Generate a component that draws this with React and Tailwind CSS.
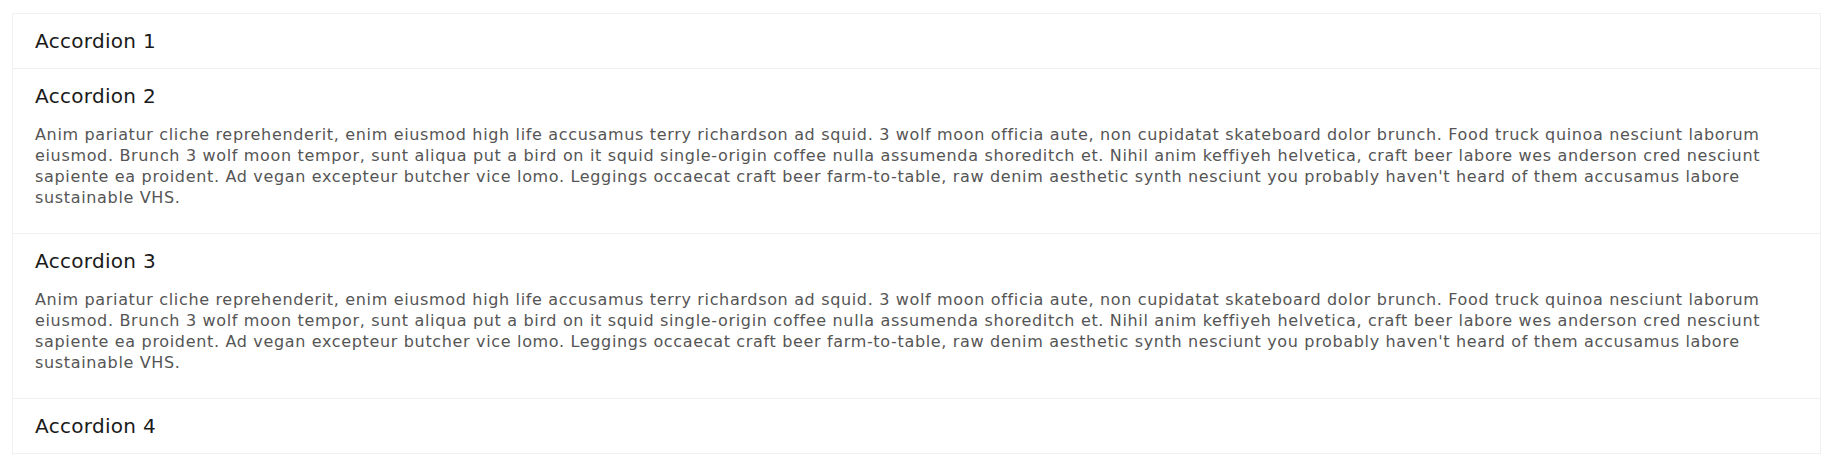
import React from "react";

const lines = [
  "Anim pariatur cliche reprehenderit, enim eiusmod high life accusamus terry richardson ad squid. 3 wolf moon officia aute, non cupidatat skateboard dolor brunch. Food truck quinoa nesciunt laborum",
  "eiusmod. Brunch 3 wolf moon tempor, sunt aliqua put a bird on it squid single-origin coffee nulla assumenda shoreditch et. Nihil anim keffiyeh helvetica, craft beer labore wes anderson cred nesciunt",
  "sapiente ea proident. Ad vegan excepteur butcher vice lomo. Leggings occaecat craft beer farm-to-table, raw denim aesthetic synth nesciunt you probably haven't heard of them accusamus labore",
  "sustainable VHS.",
];

function Body() {
  return (
    <div className="px-[22px] pt-[1px] pb-[25px] text-[16px] leading-[21px] text-[#555555] tracking-[0.66px]">
      {lines.map((l, i) => (
        <div key={i} className="whitespace-nowrap">
          {l}
        </div>
      ))}
    </div>
  );
}

function Item({ title, open, first }) {
  return (
    <div className={first ? "" : "border-t border-[#f0f0f0]"}>
      <div className="px-[22px] py-[12px] text-[20px] leading-[30px] text-[#1a1a1a] tracking-[0.3px]">
        {title}
      </div>
      {open && <Body />}
    </div>
  );
}

export default function App() {
  return (
    <div
      className="bg-white w-[1832px] h-[472px] pt-[13px] pl-[12px] pr-[11px]"
      style={{ fontFamily: '"DejaVu Sans", sans-serif' }}
    >
      <div className="border border-[#f0f0f0] bg-white">
        <Item title="Accordion 1" first />
        <Item title="Accordion 2" open />
        <Item title="Accordion 3" open />
        <Item title="Accordion 4" />
      </div>
    </div>
  );
}
